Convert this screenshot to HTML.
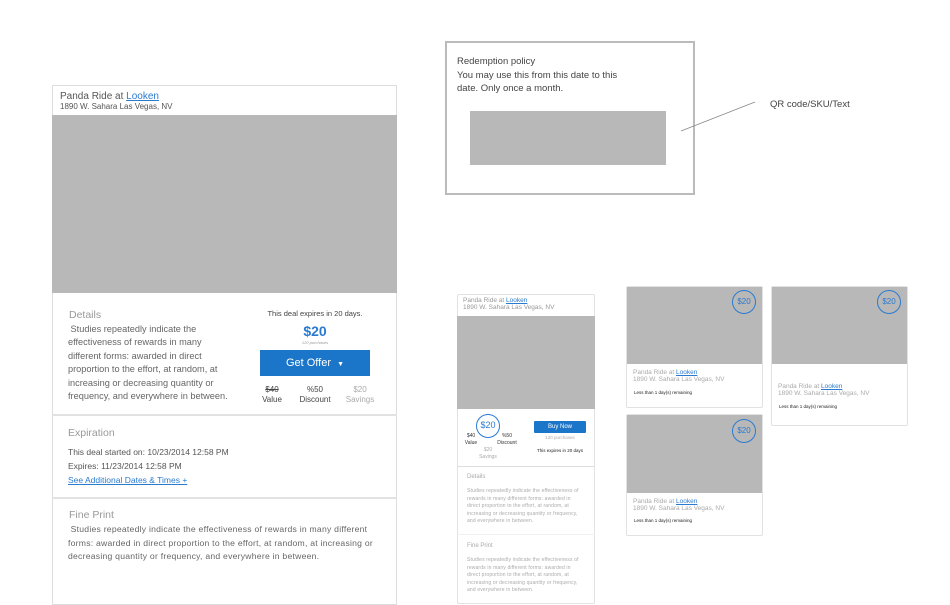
<!DOCTYPE html>
<html><head><meta charset="utf-8"><style>
*{margin:0;padding:0;box-sizing:border-box}
body{width:950px;height:599px;background:#fff;position:relative;overflow:hidden;font-family:"Liberation Sans",sans-serif;color:#555}
.a{position:absolute;white-space:nowrap}
.g{background:#b8b8b8;position:absolute}
.lk{color:#2a7ad0;text-decoration:underline}
.circ{position:absolute;border:1.5px solid #2a7ad0;border-radius:50%;color:#2a7ad0;text-align:center}
</style></head><body>

<!-- Left card -->
<div style="position:absolute;left:52px;top:85px;width:345px;height:520px;border:1px solid #ddd"></div>
<div class="a" style="left:60px;top:91px;font-size:10px;color:#555">Panda Ride at <span class="lk">Looken</span></div>
<div class="a" style="left:60px;top:102px;font-size:8px;color:#555">1890 W. Sahara Las Vegas, NV</div>
<div class="g" style="left:52px;top:115px;width:345px;height:178px"></div>
<div class="a" style="left:69px;top:309px;font-size:10.5px;color:#999">Details</div>
<div class="a" style="left:68px;top:323px;font-size:9.2px;line-height:13.4px;color:#666">&nbsp;Studies repeatedly indicate the<br>effectiveness of rewards in many<br>different forms: awarded in direct<br>proportion to the effort, at random, at<br>increasing or decreasing quantity or<br>frequency, and everywhere in between.</div>
<div class="a" style="left:255px;top:309px;width:120px;text-align:center;font-size:7.5px;color:#444">This deal expires in 20 days.</div>
<div class="a" style="left:255px;top:323px;width:120px;text-align:center;font-size:14px;color:#2a7ad0;font-weight:bold">$20</div>
<div class="a" style="left:255px;top:340px;width:120px;text-align:center;font-size:4px;color:#999;font-style:italic">120 purchases</div>
<div style="position:absolute;left:260px;top:350px;width:110px;height:26px;background:#1b76c9;color:#fff;font-size:11px;text-align:center;line-height:26px">Get Offer &nbsp;<span style="font-size:7px">▼</span></div>
<div class="a" style="left:256px;top:385px;width:32px;text-align:center;font-size:8px;line-height:10px;color:#444"><s>$40</s><br>Value</div>
<div class="a" style="left:294px;top:385px;width:42px;text-align:center;font-size:8px;line-height:10px;color:#444">%50<br>Discount</div>
<div class="a" style="left:342px;top:385px;width:36px;text-align:center;font-size:8px;line-height:10px;color:#aaa">$20<br>Savings</div>
<div style="position:absolute;left:52px;top:414px;width:345px;height:2px;background:#e2e2e2"></div>
<div class="a" style="left:68px;top:427px;font-size:10.5px;color:#999">Expiration</div>
<div class="a" style="left:68px;top:447px;font-size:8.5px;color:#555">This deal started on: 10/23/2014 12:58 PM</div>
<div class="a" style="left:68px;top:461px;font-size:8.5px;color:#555">Expires: 11/23/2014 12:58 PM</div>
<div class="a lk" style="left:68px;top:475px;font-size:8.5px">See Additional Dates &amp; Times +</div>
<div style="position:absolute;left:52px;top:497px;width:345px;height:2px;background:#e2e2e2"></div>
<div class="a" style="left:69px;top:509px;font-size:10.5px;color:#999">Fine Print</div>
<div class="a" style="left:68px;top:523px;font-size:8.6px;line-height:13.5px;color:#666;letter-spacing:0.25px">&nbsp;Studies repeatedly indicate the effectiveness of rewards in many different<br>forms: awarded in direct proportion to the effort, at random, at increasing or<br>decreasing quantity or frequency, and everywhere in between.</div>

<!-- Redemption -->
<div style="position:absolute;left:445px;top:41px;width:250px;height:154px;border:2px solid #bbb"></div>
<div class="a" style="left:457px;top:55px;font-size:9.5px;line-height:13.5px;color:#444">Redemption policy<br>You may use this from this date to this<br>date. Only once a month.</div>
<div class="g" style="left:470px;top:111px;width:196px;height:54px"></div>
<svg style="position:absolute;left:0;top:0" width="950" height="599"><line x1="681" y1="131" x2="755" y2="102" stroke="#888" stroke-width="0.8"/></svg>
<div class="a" style="left:770px;top:99px;font-size:9.5px;color:#444">QR code/SKU/Text</div>

<!-- Mobile card -->
<div style="position:absolute;left:457px;top:294px;width:138px;height:310px;border:1px solid #e2e2e2;border-radius:2px"></div>
<div class="a" style="left:463px;top:297px;font-size:6.5px;color:#999">Panda Ride at <span class="lk">Looken</span></div>
<div class="a" style="left:463px;top:304px;font-size:6.5px;color:#999">1890 W. Sahara Las Vegas, NV</div>
<div class="g" style="left:457px;top:316px;width:138px;height:93px"></div>
<div class="circ" style="left:476px;top:414px;width:24px;height:24px;font-size:9px;line-height:21px">$20</div>
<div class="a" style="left:462px;top:433px;width:18px;text-align:center;font-size:5px;line-height:7px;color:#333">$40<br>Value</div>
<div class="a" style="left:494px;top:433px;width:26px;text-align:center;font-size:5px;line-height:7px;color:#333">%50<br>Discount</div>
<div class="a" style="left:478px;top:447px;width:20px;text-align:center;font-size:5px;line-height:7px;color:#aaa">$20<br>Savings</div>
<div style="position:absolute;left:534px;top:421px;width:52px;height:12px;background:#1b76c9;color:#fff;font-size:6px;text-align:center;line-height:12px;border-radius:1px">Buy Now</div>
<div class="a" style="left:534px;top:435px;width:52px;text-align:center;font-size:4.5px;color:#aaa">120 purchases</div>
<div class="a" style="left:530px;top:448px;width:60px;text-align:center;font-size:4.5px;color:#222">This expires in 20 days</div>
<div style="position:absolute;left:457px;top:466px;width:138px;height:1px;background:#ddd"></div>
<div class="a" style="left:467px;top:474px;font-size:6px;color:#aaa">Details</div>
<div class="a" style="left:467px;top:488px;font-size:5px;line-height:7.5px;color:#aaa;letter-spacing:0.15px">Studies repeatedly indicate the effectiveness of<br>rewards in many different forms: awarded in<br>direct proportion to the effort, at random, at<br>increasing or decreasing quantity or frequency,<br>and everywhere in between.</div>
<div style="position:absolute;left:457px;top:534px;width:138px;height:1px;background:#f0f0f0"></div>
<div class="a" style="left:467px;top:543px;font-size:6px;color:#aaa">Fine Print</div>
<div class="a" style="left:467px;top:557px;font-size:5px;line-height:7.5px;color:#aaa;letter-spacing:0.15px">Studies repeatedly indicate the effectiveness of<br>rewards in many different forms: awarded in<br>direct proportion to the effort, at random, at<br>increasing or decreasing quantity or frequency,<br>and everywhere in between.</div>

<!-- Small cards -->
<div style="position:absolute;left:626px;top:286px;width:137px;height:122px;border:1px solid #e2e2e2;border-radius:2px"></div>
<div class="g" style="left:627px;top:287px;width:135px;height:77px"></div>
<div class="circ" style="left:732px;top:290px;width:24px;height:24px;font-size:8px;line-height:21px">$20</div>
<div class="a" style="left:633px;top:369px;font-size:6.5px;color:#aaa">Panda Ride at <span class="lk">Looken</span></div>
<div class="a" style="left:633px;top:376px;font-size:6.5px;color:#aaa">1890 W. Sahara Las Vegas, NV</div>
<div class="a" style="left:634px;top:390px;font-size:4.5px;color:#222">Less than 1 day(s) remaining</div>

<div style="position:absolute;left:771px;top:286px;width:137px;height:140px;border:1px solid #e2e2e2;border-radius:2px"></div>
<div class="g" style="left:772px;top:287px;width:135px;height:77px"></div>
<div class="circ" style="left:877px;top:290px;width:24px;height:24px;font-size:8px;line-height:21px">$20</div>
<div class="a" style="left:778px;top:383px;font-size:6.5px;color:#aaa">Panda Ride at <span class="lk">Looken</span></div>
<div class="a" style="left:778px;top:390px;font-size:6.5px;color:#aaa">1890 W. Sahara Las Vegas, NV</div>
<div class="a" style="left:779px;top:404px;font-size:4.5px;color:#222">Less than 1 day(s) remaining</div>

<div style="position:absolute;left:626px;top:414px;width:137px;height:122px;border:1px solid #e2e2e2;border-radius:2px"></div>
<div class="g" style="left:627px;top:415px;width:135px;height:78px"></div>
<div class="circ" style="left:732px;top:419px;width:24px;height:24px;font-size:8px;line-height:21px">$20</div>
<div class="a" style="left:633px;top:498px;font-size:6.5px;color:#aaa">Panda Ride at <span class="lk">Looken</span></div>
<div class="a" style="left:633px;top:505px;font-size:6.5px;color:#aaa">1890 W. Sahara Las Vegas, NV</div>
<div class="a" style="left:634px;top:518px;font-size:4.5px;color:#222">Less than 1 day(s) remaining</div>
</body></html>
